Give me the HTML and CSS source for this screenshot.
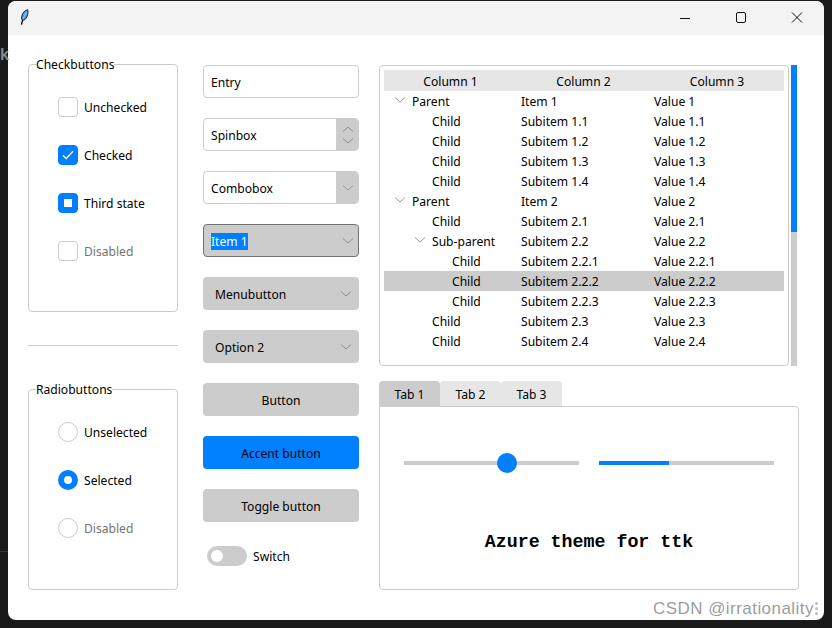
FILE: index.html
```html
<!DOCTYPE html>
<html lang="en">
<head>
<meta charset="utf-8">
<title>Azure theme for ttk</title>
<link rel="stylesheet" href="styles.css">
</head>
<body>
<span class="desk-letter">k</span>
<span class="desk-line"></span>
<main class="window">
  <header class="titlebar">
    <svg class="feather" width="9" height="16" viewBox="0 0 9 16"><path d="M3 10L1.400 15.600" fill="none" stroke="#111" stroke-width="1.400"/><path d="M7.800 .7C8.400 3.600 7.600 7.300 5.900 9.500 4.800 10.900 3.400 11.500 2 11.100 1.100 8.500 1.900 5 3.900 2.900 5 1.700 6.400 1 7.800 .7Z" fill="#4a94e6" stroke="#14294a" stroke-width="1"/><path d="M6.500 2.800L3 9.800" fill="none" stroke="#bcd9f7" stroke-width=".8"/></svg>
    <div class="controls">
      <svg width="12" height="12" viewBox="0 0 12 12"><path d="M1 6.500H11" stroke="#111" fill="none"/></svg>
      <svg width="12" height="12" viewBox="0 0 12 12"><rect x="1.500" y=".5" width="9" height="10" rx="1.500" stroke="#111" fill="none"/></svg>
      <svg width="12" height="12" viewBox="0 0 12 12"><path d="M1 .5L11 10.500M11 .5L1 10.500" stroke="#111" fill="none"/></svg>
    </div>
  </header>
  <div class="content">
    <section class="col-left">
      <div class="frame frame-check">
        <span class="legend">Checkbuttons</span>
        <label class="opt"><span class="box"></span>Unchecked</label>
        <label class="opt"><span class="box box-on"><svg width="12" height="10" viewBox="0 0 12 10"><path d="M1 5.500L4.300 8.500L11 1.300" fill="none" stroke="#fff" stroke-width="1.300"/></svg></span>Checked</label>
        <label class="opt"><span class="box box-on"><span class="square"></span></span>Third state</label>
        <label class="opt opt-off"><span class="box"></span>Disabled</label>
      </div>
      <hr class="sep">
      <div class="frame frame-radio">
        <span class="legend">Radiobuttons</span>
        <label class="opt"><span class="box radio"></span>Unselected</label>
        <label class="opt"><span class="box radio radio-on"></span>Selected</label>
        <label class="opt opt-off"><span class="box radio"></span>Disabled</label>
      </div>
    </section>

    <section class="col-mid">
      <div class="field"><span class="field-text">Entry</span></div>
      <div class="field"><span class="field-text">Spinbox</span>
        <span class="side side-spin"><svg width="12" height="6" viewBox="0 0 12 6"><path d="M1 5.500L6 1L11 5.500" fill="none" stroke="#8c8c8c"/></svg><svg width="12" height="6" viewBox="0 0 12 6"><path d="M1 .5L6 5L11 .5" fill="none" stroke="#8c8c8c"/></svg></span></div>
      <div class="field"><span class="field-text">Combobox</span>
        <span class="side"><svg width="12" height="6" viewBox="0 0 12 6"><path d="M1 .5L6 5L11 .5" fill="none" stroke="#999"/></svg></span></div>
      <div class="field field-ro"><span class="field-text selected">Item 1</span><svg class="chev" width="12" height="6" viewBox="0 0 12 6"><path d="M1 .5L6 5L11 .5" fill="none" stroke="#8c8c8c"/></svg></div>
      <div class="btn btn-menu">Menubutton<svg width="12" height="6" viewBox="0 0 12 6"><path d="M1 .5L6 5L11 .5" fill="none" stroke="#8c8c8c"/></svg></div>
      <div class="btn btn-menu">Option 2<svg width="12" height="6" viewBox="0 0 12 6"><path d="M1 .5L6 5L11 .5" fill="none" stroke="#8c8c8c"/></svg></div>
      <div class="btn">Button</div>
      <div class="btn btn-accent">Accent button</div>
      <div class="btn">Toggle button</div>
      <div class="switch-row"><span class="switch"><span class="knob"></span></span>Switch</div>
    </section>

    <section class="col-right">
      <div class="tree-wrap">
        <div class="tree">
          <div class="row row-head"><span>Column 1</span><span>Column 2</span><span>Column 3</span></div>
          <div class="row"><span class="c1 d1"><svg class="tw" width="12" height="6" viewBox="0 0 12 6"><path d="M1 .5L6 5L11 .5" fill="none" stroke="#999"/></svg>Parent</span><span>Item 1</span><span>Value 1</span></div>
          <div class="row"><span class="c1 d2">Child</span><span>Subitem 1.1</span><span>Value 1.1</span></div>
          <div class="row"><span class="c1 d2">Child</span><span>Subitem 1.2</span><span>Value 1.2</span></div>
          <div class="row"><span class="c1 d2">Child</span><span>Subitem 1.3</span><span>Value 1.3</span></div>
          <div class="row"><span class="c1 d2">Child</span><span>Subitem 1.4</span><span>Value 1.4</span></div>
          <div class="row"><span class="c1 d1"><svg class="tw" width="12" height="6" viewBox="0 0 12 6"><path d="M1 .5L6 5L11 .5" fill="none" stroke="#999"/></svg>Parent</span><span>Item 2</span><span>Value 2</span></div>
          <div class="row"><span class="c1 d2">Child</span><span>Subitem 2.1</span><span>Value 2.1</span></div>
          <div class="row"><span class="c1 d2"><svg class="tw" width="12" height="6" viewBox="0 0 12 6"><path d="M1 .5L6 5L11 .5" fill="none" stroke="#999"/></svg>Sub-parent</span><span>Subitem 2.2</span><span>Value 2.2</span></div>
          <div class="row"><span class="c1 d3">Child</span><span>Subitem 2.2.1</span><span>Value 2.2.1</span></div>
          <div class="row row-sel"><span class="c1 d3">Child</span><span>Subitem 2.2.2</span><span>Value 2.2.2</span></div>
          <div class="row"><span class="c1 d3">Child</span><span>Subitem 2.2.3</span><span>Value 2.2.3</span></div>
          <div class="row"><span class="c1 d2">Child</span><span>Subitem 2.3</span><span>Value 2.3</span></div>
          <div class="row"><span class="c1 d2">Child</span><span>Subitem 2.4</span><span>Value 2.4</span></div>
        </div>
        <div class="scrollbar"><span class="thumb"></span></div>
      </div>
      <div class="tabs">
        <span class="tab tab-on">Tab 1</span><span class="tab">Tab 2</span><span class="tab">Tab 3</span>
      </div>
      <div class="panel">
        <div class="meters">
          <div class="scale"><span class="scale-thumb"></span></div>
          <div class="progress"><span class="bar"></span></div>
        </div>
        <div class="headline">Azure theme for ttk</div>
      </div>
    </section>
  </div>
</main>
<span class="watermark">CSDN @irrationality</span>
<span class="wm-dots"><i></i><i></i><i></i></span>
</body>
</html>
```
FILE: styles.css
```css
* { box-sizing: border-box; }
html, body { height: 100%; }
body {
  margin: 0;
  padding: 1px 8px 8px;
  background: #1a1a1a;
  overflow: hidden;
  font: 12.1px/19px "Noto Sans", sans-serif;
  color: #000;
}
.window {
  width: 816px;
  height: 619px;
  background: #fff;
  border-radius: 8px;
  overflow: hidden;
}
.titlebar {
  height: 34px;
  background: #f3f3f3;
  display: flex;
  align-items: center;
  padding-left: 12px;
}
.controls {
  margin-left: auto;
  display: flex;
  gap: 44px;
  padding-right: 21px;
}
.feather { display: block; margin-top: -3px; }
.content {
  display: flex;
  padding: 29px 25px 0 20px;
  align-items: flex-start;
}
.col-left { width: 150px; margin-right: 25px; }
.frame {
  position: relative;
  border: 1px solid #ccc;
  border-radius: 4px;
  display: flex;
  flex-direction: column;
  gap: 28px;
  padding: 32px 0 0 29px;
}
.frame-check { height: 248px; }
.frame-radio { height: 201px; }
.legend {
  position: absolute;
  top: -10px;
  left: 7px;
  background: #fff;
}
.opt { display: flex; align-items: center; gap: 6px; height: 20px; }
.opt-off { color: #737373; }
.box {
  width: 20px;
  height: 20px;
  border: 1px solid #ccc;
  border-radius: 4px;
  display: flex;
  align-items: center;
  justify-content: center;
  flex: none;
}
.box-on { background: #007fff; border-color: #007fff; }
.square { width: 8px; height: 8px; background: #fff; }
.radio { border-radius: 50%; }
.radio-on { border: 6px solid #007fff; }
.sep { margin: 33px 0 43px; border: 0; border-top: 1px solid #ccc; }

.col-mid {
  width: 156px;
  margin-right: 20px;
  margin-top: 1px;
  display: flex;
  flex-direction: column;
  gap: 20px;
}
.field {
  height: 33px;
  border: 1px solid #ccc;
  border-radius: 4px;
  display: flex;
  align-items: center;
  padding-left: 7px;
  position: relative;
  overflow: hidden;
}
.field-text { line-height: 17px; margin-top: 2px; }
.side {
  margin-left: auto;
  margin-right: -1px;
  width: 23px;
  height: 33px;
  background: #ccc;
  display: flex;
  flex-direction: column;
  align-items: center;
  justify-content: center;
  padding-left: 1px;
}
.side-spin { gap: 6px; }
.field-ro { background: #ccc; border-color: #737373; }
.chev { margin-left: auto; margin-right: 4px; }
.selected { background: #007fff; color: #fff; }
.btn {
  height: 33px;
  padding-top: 1px;
  background: #ccc;
  border-radius: 4px;
  display: flex;
  align-items: center;
  justify-content: center;
}
.btn-menu { justify-content: space-between; padding: 1px 7px 0 12px; }
.btn-menu svg { margin-top: -1px; }
.btn-accent { background: #007fff; }
.switch-row {
  display: flex;
  align-items: center;
  gap: 6px;
  height: 20px;
  margin: 4px 0 0 4px;
}
.switch {
  width: 40px;
  height: 20px;
  background: #ccc;
  border-radius: 10px;
  display: flex;
  align-items: center;
  padding-left: 4px;
}
.knob { width: 12px; height: 12px; background: #fff; border-radius: 50%; }

.col-right { width: 420px; margin-top: 1px; }
.tree-wrap { display: flex; gap: 2px; height: 301px; padding-right: 2px; }
.tree {
  width: 410px;
  border: 1px solid #ccc;
  border-radius: 4px;
  padding: 4px;
}
.row {
  display: grid;
  grid-template-columns: 133px 133px 134px;
  height: 20px;
  align-items: center;
}
.row > span { padding-left: 4px; white-space: nowrap; }
.row-head { height: 21px; background: #e6e6e6; }
.row-head > span { padding: 2px 0 0; text-align: center; }
.row-sel { background: #ccc; }
.c1 { display: flex; align-items: center; }
.row > .d1 { padding-left: 28px; }
.row > .d2 { padding-left: 48px; }
.row > .d3 { padding-left: 68px; }
.tw { margin: 0 6px 2px -18px; flex: none; }
.scrollbar { width: 6px; background: #ccc; }
.thumb { display: block; height: 167px; background: #007fff; }
.tabs { display: flex; margin-top: 15px; height: 25px; }
.tab {
  width: 61px;
  background: #e6e6e6;
  border-radius: 4px 4px 0 0;
  text-align: center;
  line-height: 27px;
}
.tab-on { background: #ccc; }
.panel {
  height: 184px;
  border: 1px solid #ccc;
  border-radius: 0 4px 4px 4px;
  padding: 46px 24px 0;
}
.meters { display: flex; gap: 20px; align-items: center; height: 20px; }
.scale, .progress { width: 175px; height: 4px; background: #ccc; position: relative; }
.scale-thumb {
  position: absolute;
  left: 93px;
  top: -8px;
  width: 20px;
  height: 20px;
  border-radius: 50%;
  background: #007fff;
}
.bar { display: block; width: 70px; height: 4px; background: #007fff; }
.headline {
  margin-top: 58px;
  text-align: center;
  font: bold 18.3px/22px "Liberation Mono", monospace;
}
.watermark {
  position: absolute;
  left: 653px;
  top: 599px;
  font: 17px/20px "Liberation Sans", sans-serif;
  letter-spacing: .45px;
  color: rgba(110, 110, 110, .7);
}
.wm-dots {
  position: absolute;
  left: 815px;
  top: 602px;
  display: flex;
  flex-direction: column;
  gap: 2px;
}
.wm-dots i { width: 3px; height: 3px; border-radius: 50%; background: #bbb; }
.desk-letter {
  position: absolute;
  left: 0;
  top: 45px;
  font: bold 16px/20px "Liberation Sans", sans-serif;
  color: #888;
}
.desk-line {
  position: absolute;
  left: 0;
  top: 551px;
  width: 8px;
  height: 1px;
  background: #333;
}
```
